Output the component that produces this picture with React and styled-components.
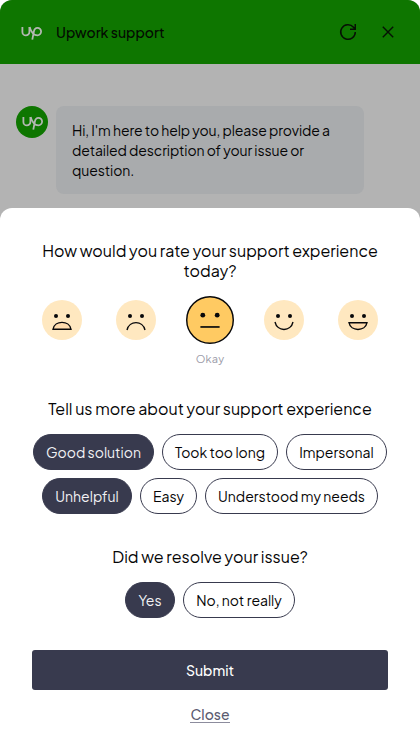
import React, { useState } from 'react';
import styled, { createGlobalStyle } from 'styled-components';

const GlobalStyle = createGlobalStyle`
  *, *::before, *::after { box-sizing: border-box; }
  body {
    margin: 0;
    background: #fff;
    color: #050506;
    font-family: "Plus Jakarta Sans", Inter, "Liberation Sans", sans-serif;
  }
  button { font: inherit; color: inherit; padding: 0; border: 0; background: none; cursor: pointer; }
  svg { display: block; }
`;

const Widget = styled.main`
  width: 420px;
  height: 750px;
  display: flex;
  flex-direction: column;
  overflow: hidden;
  background: #b3b3b3;
  border-radius: 12px 12px 0 0;
`;

const Header = styled.header`
  height: 64px;
  flex: none;
  display: flex;
  align-items: center;
  padding: 0 22px 0 21px;
  background: #0e7600;
`;

const HeaderTitle = styled.h1`
  flex: 1;
  margin: 0 0 1px 14px;
  font-size: 14px;
  line-height: 20px;
  font-weight: 500;
  color: #030a02;
`;

const HeaderActions = styled.div`
  display: flex;
  align-items: center;
  gap: 20px;
`;

const IconButton = styled.button`
  width: 20px;
  height: 20px;
`;

const Conversation = styled.section`
  height: 144px;
  flex: none;
  display: flex;
  align-items: flex-start;
  gap: 8px;
  padding: 42px 16px 0;
`;

const Avatar = styled.div`
  width: 32px;
  height: 32px;
  display: grid;
  place-items: center;
  border-radius: 50%;
  background: #0e7600;
`;

const Bubble = styled.div`
  width: 308px;
  height: 88px;
  padding: 14px 16px;
  border-radius: 8px;
  background: #a9abad;
  font-size: 14px;
  line-height: 20px;
  letter-spacing: -0.1px;
  white-space: nowrap;
`;

const Sheet = styled.section`
  flex: 1;
  display: flex;
  flex-direction: column;
  align-items: center;
  padding: 33px 32px 0;
  background: #fff;
  border-radius: 12px 12px 0 0;
`;

const Question = styled.h2`
  margin: 0;
  font-size: 16px;
  line-height: 20px;
  font-weight: 400;
  text-align: center;
`;

const Ratings = styled.div`
  display: flex;
  gap: 26px;
  margin-top: 15px;
`;

const Rating = styled.button`
  width: 48px;
  height: 48px;
  display: grid;
  place-items: center;
  border-radius: 50%;
`;

const RatingLabel = styled.div`
  height: 16px;
  margin: 7px 0 32px;
  font-size: 11px;
  line-height: 16px;
  letter-spacing: 0.2px;
  color: #9b9ba8;
`;

const ChipRow = styled.div`
  display: flex;
  justify-content: center;
  gap: 8px;
  margin-top: ${(p) => p.$top}px;
`;

const Chip = styled.button`
  && {
    width: ${(p) => p.$width}px;
    height: 36px;
    flex: none;
    border: 1px solid #383a4e;
    border-radius: 18px;
    background: ${(p) => (p.$active ? '#383a4e' : '#fff')};
    color: ${(p) => (p.$active ? '#f2f2f5' : '#050506')};
    font-size: 14px;
    line-height: 20px;
    white-space: nowrap;
  }
`;

const ResolveQuestion = styled(Question)`
  margin-top: 33px;
`;

const Submit = styled.button`
  && {
    width: 100%;
    height: 40px;
    margin-top: 32px;
    flex: none;
    border-radius: 3px;
    background: #383a4e;
    color: #fff;
    font-size: 14px;
    font-weight: 500;
    line-height: 20px;
  }
`;

const Close = styled.button`
  && {
    height: 17px;
    margin-top: 16px;
    border-bottom: 1px solid #8c8c9d;
    color: #5b5b70;
    font-size: 14px;
    font-weight: 500;
    line-height: 17px;
  }
`;

function UpMark() {
  return (
    <svg width="21" height="16" viewBox="0 0 21 16" fill="none" stroke="#b3b7b1" strokeWidth="1.8" aria-hidden="true">
      <path d="M1.4 3V7.9A3.5 3.5 0 0 0 8.4 7.9V3" />
      <path d="M8.6 3C9.8 7 12.6 11.3 16.4 11.3A3.7 3.7 0 1 0 16.4 3.9C14.2 3.9 13.2 5.7 12.8 7.8L11.3 15.7" />
    </svg>
  );
}

const MOUTHS = {
  awful: <path d="M11 29.3C12.6 20 27.4 20 29 29.3Z" fill="#ffdcae" />,
  bad: <path d="M11 30C13.2 20.1 26.8 20.1 29 30" fill="none" />,
  okay: <path d="M12 25.8H28" fill="none" />,
  good: <path d="M11 22C13.2 31.9 26.8 31.9 29 22" fill="none" />,
  great: <path d="M11 22.7C12.6 31.7 27.4 31.7 29 22.7Z" fill="#ffdcae" />,
};

function Face({ mood, active }) {
  const size = active ? 48 : 40;
  return (
    <svg width={size} height={size} viewBox="0 0 40 40" stroke="#08080a" strokeWidth="1.4">
      {active ? (
        <circle cx="20" cy="20" r="19.4" fill="#ffca62" strokeWidth="1.2" />
      ) : (
        <circle cx="20" cy="20" r="20" fill="#ffe8c0" stroke="none" />
      )}
      <circle cx="14" cy="16" r="2" fill="#08080a" stroke="none" />
      <circle cx="26" cy="16" r="2" fill="#08080a" stroke="none" />
      {MOUTHS[mood]}
    </svg>
  );
}

const TOPICS = [
  [
    { text: 'Good solution', width: 121 },
    { text: 'Took too long', width: 116 },
    { text: 'Impersonal', width: 101 },
  ],
  [
    { text: 'Unhelpful', width: 90 },
    { text: 'Easy', width: 57 },
    { text: 'Understood my needs', width: 173 },
  ],
];

const ANSWERS = [
  { text: 'Yes', width: 50 },
  { text: 'No, not really', width: 112 },
];

function Option({ item, active, onClick }) {
  return (
    <Chip $width={item.width} $active={active} aria-pressed={active} onClick={onClick}>
      {item.text}
    </Chip>
  );
}

export default function App() {
  const [rating, setRating] = useState('okay');
  const [topics, setTopics] = useState(['Good solution', 'Unhelpful']);
  const [answer, setAnswer] = useState('Yes');

  const toggle = (text) =>
    setTopics((list) => (list.includes(text) ? list.filter((t) => t !== text) : [...list, text]));

  return (
    <>
      <GlobalStyle />
      <Widget>
        <Header>
          <UpMark />
          <HeaderTitle>Upwork support</HeaderTitle>
          <HeaderActions>
            <IconButton aria-label="Restart">
              <svg width="20" height="20" viewBox="0 0 20 20" fill="none" stroke="#061004" strokeWidth="1.5">
                <path d="M17.3 10A7.3 7.3 0 1 1 15.5 5.2L17 6.8M17.25 2V7.25H12" />
              </svg>
            </IconButton>
            <IconButton aria-label="Dismiss">
              <svg width="20" height="20" viewBox="0 0 20 20" fill="none" stroke="#061004" strokeWidth="1.4">
                <path d="M4.8 4.8L15.2 15.2M15.2 4.8L4.8 15.2" />
              </svg>
            </IconButton>
          </HeaderActions>
        </Header>
        <Conversation>
          <Avatar><UpMark /></Avatar>
          <Bubble>
            Hi, I'm here to help you, please provide a<br />
            detailed description of your issue or<br />
            question.
          </Bubble>
        </Conversation>
        <Sheet>
          <Question>How would you rate your support experience<br />today?</Question>
          <Ratings>
            {Object.keys(MOUTHS).map((mood) => (
              <Rating key={mood} aria-label={mood} onClick={() => setRating(mood)}>
                <Face mood={mood} active={mood === rating} />
              </Rating>
            ))}
          </Ratings>
          <RatingLabel>Okay</RatingLabel>
          <Question>Tell us more about your support experience</Question>
          {TOPICS.map((row, i) => (
            <ChipRow key={row[0].text} $top={i === 0 ? 15 : 8}>
              {row.map((item) => (
                <Option key={item.text} item={item} active={topics.includes(item.text)} onClick={() => toggle(item.text)} />
              ))}
            </ChipRow>
          ))}
          <ResolveQuestion>Did we resolve your issue?</ResolveQuestion>
          <ChipRow $top={15}>
            {ANSWERS.map((item) => (
              <Option key={item.text} item={item} active={answer === item.text} onClick={() => setAnswer(item.text)} />
            ))}
          </ChipRow>
          <Submit>Submit</Submit>
          <Close>Close</Close>
        </Sheet>
      </Widget>
    </>
  );
}
